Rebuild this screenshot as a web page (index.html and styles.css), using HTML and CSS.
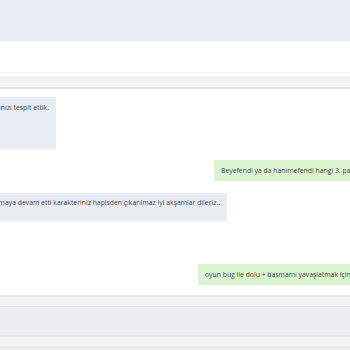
FILE: index.html
```html
<!DOCTYPE html>
<html lang="tr">
<head>
  <meta charset="UTF-8">
  <title>Destek Sohbeti</title>
  <meta name="viewport" content="width=device-width, initial-scale=1.0">
  <link rel="stylesheet" href="styles.css">
</head>
<body>

<div class="page">
  <div class="header"></div>
  <div class="subheader"></div>
  <div class="tabbar"></div>

  <div class="chat">
    <div class="row row-left first">
      <div class="bubble bubble-in tall">Oyunda hile kullandığınızı tespit ettik.</div>
    </div>

    <div class="row row-right">
      <div class="bubble bubble-out">Beyefendi ya da hanımefendi hangi 3. parti yazılımdan bahsediyorsunuz?</div>
    </div>

    <div class="row row-left wide">
      <div class="bubble bubble-in mid">Hesabınız hile yapmaya devam etti karakteriniz hapisden çıkarılmaz iyi akşamlar dileriz..</div>
    </div>

    <div class="row row-right late">
      <div class="bubble bubble-out">oyun bug ile dolu + basmamı yavaşlatmak için</div>
    </div>
  </div>

  <div class="footer">
    <div class="strip"></div>
    <div class="band"></div>
    <div class="strip"></div>
    <div class="band"></div>
  </div>
</div>

</body>
</html>
```

FILE: styles.css
```css
* {
  box-sizing: border-box;
  font-family: "Open Sans", Arial, sans-serif;
}
body {
  margin: 0;
  padding: 0;
  background: #fff;
  overflow: hidden;
}
.page {
  width: 350px;
  height: 350px;
  overflow: hidden;
}
.header {
  height: 41px;
  background: #e8ebf2;
}
.subheader {
  height: 32px;
  border-top: 1px solid #f6f7f9;
  border-bottom: 1px solid #f3f3f3;
}
.tabbar {
  height: 12px;
  margin-top: 4px;
  background: #f3f3f3;
  border-top: 1px solid #e9e9e9;
  border-bottom: 2px solid #e4e4e4;
}
.chat {
  height: 198px;
}
.row {
  display: flex;
}
.row-left {
  width: 56px;
  justify-content: flex-end;
}
.row-left.wide {
  width: 227px;
  margin-top: 12px;
}
.row-left.first {
  margin-top: 8px;
}
.row-right {
  padding-left: 214px;
  margin-top: 11px;
}
.row-right.late {
  padding-left: 198px;
  margin-top: 43px;
}
.bubble {
  flex-shrink: 0;
  white-space: nowrap;
  font-size: 6.85px;
  color: #4a4a4a;
  padding: 6px 7px;
}
.bubble-in {
  background: #e9ecf3;
}
.bubble-out {
  background: #dcf5d1;
}
.tall {
  height: 52px;
}
.mid {
  height: 28px;
  padding-top: 5px;
}
.footer .strip {
  height: 12px;
  background: #f4f4f5;
  border-top: 2px solid #e6e6e8;
  border-bottom: 1px solid #e6e6e8;
}
.footer .band {
  height: 28px;
  background: #eceef4;
}
```
